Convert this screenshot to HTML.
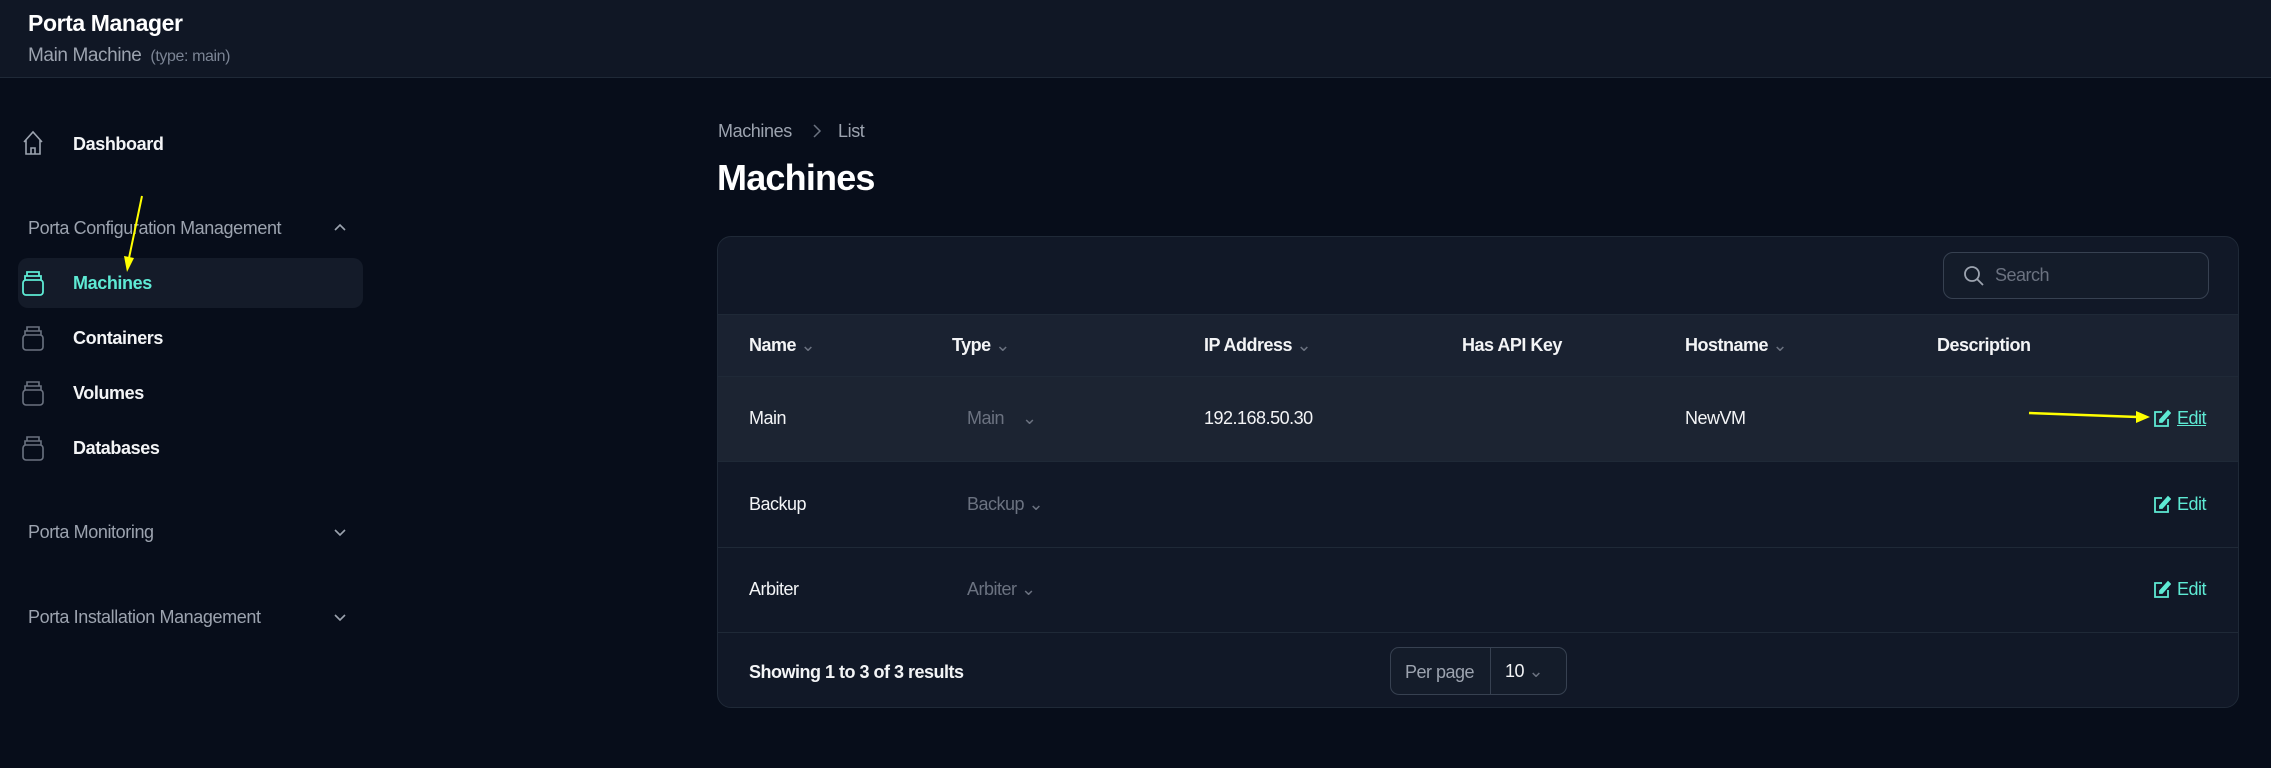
<!DOCTYPE html>
<html><head><meta charset="utf-8"><style>
*{margin:0;padding:0;box-sizing:border-box}
body{width:2271px;height:768px;background:#070d1a;font-family:"Liberation Sans",sans-serif;color:#f3f4f6;position:relative;overflow:hidden}
.a{position:absolute;white-space:nowrap}
.hdr{position:absolute;left:0;top:0;width:2271px;height:78px;background:#101725;border-bottom:1px solid #1f2937}
.nav{font-size:18px;font-weight:bold;letter-spacing:-0.4px;color:#f3f4f6}
.sec{font-size:18px;color:#9ca3af;letter-spacing:-0.4px}
.card{position:absolute;left:717px;top:236px;width:1522px;height:472px;background:#111827;border:1px solid #1f2937;border-radius:14px;overflow:hidden}
.row{position:absolute;left:0;width:1522px;border-top:1px solid #1f2937}
.t{font-size:18px;letter-spacing:-0.5px}
.th{font-weight:bold}
.g{color:#6b7280}
.teal{color:#5eead4}
svg{position:absolute}
</style></head><body>
<div class="hdr"></div>
<div class="a" style="left:28px;top:10px;font-size:23px;font-weight:bold;letter-spacing:-0.4px;color:#fff">Porta Manager</div>
<div class="a" style="left:28px;top:45px;font-size:19px;color:#9ca3af;letter-spacing:-0.4px">Main Machine <span style="font-size:16px;color:#7b8494">&nbsp;(type: main)</span></div>

<!-- sidebar -->
<svg style="left:22px;top:130px" width="22" height="26" viewBox="0 0 22 26" fill="none" stroke="#9ca3af" stroke-width="1.6"><path d="M2 12 L11 2 L20 12 M4 10 V24 H18 V10 M9 24 V18 H13 V24"/></svg>
<div class="a nav" style="left:73px;top:134px">Dashboard</div>
<div class="a sec" style="left:28px;top:218px">Porta Configuration Management</div>
<svg style="left:333px;top:222px" width="14" height="10" viewBox="0 0 14 10" fill="none" stroke="#9ca3af" stroke-width="1.6"><path d="M2 8 L7 3 L12 8"/></svg>
<div class="a" style="left:18px;top:258px;width:345px;height:50px;background:#141b29;border-radius:10px"></div>
<svg style="left:21px;top:269px" width="24" height="28" viewBox="0 0 24 28" fill="none" stroke="#5eead4" stroke-width="1.8"><rect x="2" y="11" width="20" height="15" rx="3"/><path d="M4 11 V7 H20 V11 M6 7 V3 H18 V7"/></svg>
<div class="a nav teal" style="left:73px;top:273px">Machines</div>
<svg style="left:21px;top:324px" width="24" height="28" viewBox="0 0 24 28" fill="none" stroke="#6b7280" stroke-width="1.6"><rect x="2" y="11" width="20" height="15" rx="3"/><path d="M4 11 V7 H20 V11 M6 7 V3 H18 V7"/></svg>
<div class="a nav" style="left:73px;top:328px">Containers</div>
<svg style="left:21px;top:379px" width="24" height="28" viewBox="0 0 24 28" fill="none" stroke="#6b7280" stroke-width="1.6"><rect x="2" y="11" width="20" height="15" rx="3"/><path d="M4 11 V7 H20 V11 M6 7 V3 H18 V7"/></svg>
<div class="a nav" style="left:73px;top:383px">Volumes</div>
<svg style="left:21px;top:434px" width="24" height="28" viewBox="0 0 24 28" fill="none" stroke="#6b7280" stroke-width="1.6"><rect x="2" y="11" width="20" height="15" rx="3"/><path d="M4 11 V7 H20 V11 M6 7 V3 H18 V7"/></svg>
<div class="a nav" style="left:73px;top:438px">Databases</div>
<div class="a sec" style="left:28px;top:522px">Porta Monitoring</div>
<svg style="left:333px;top:528px" width="14" height="10" viewBox="0 0 14 10" fill="none" stroke="#9ca3af" stroke-width="1.6"><path d="M2 2 L7 7 L12 2"/></svg>
<div class="a sec" style="left:28px;top:607px">Porta Installation Management</div>
<svg style="left:333px;top:613px" width="14" height="10" viewBox="0 0 14 10" fill="none" stroke="#9ca3af" stroke-width="1.6"><path d="M2 2 L7 7 L12 2"/></svg>

<!-- main -->
<div class="a" style="left:718px;top:121px;font-size:18px;color:#9ca3af;letter-spacing:-0.4px">Machines</div>
<svg style="left:812px;top:123px" width="10" height="16" viewBox="0 0 10 16" fill="none" stroke="#6b7280" stroke-width="1.5"><path d="M2 2 L8 8 L2 14"/></svg>
<div class="a" style="left:838px;top:121px;font-size:18px;color:#9ca3af;letter-spacing:-0.4px">List</div>
<div class="a" style="left:717px;top:157px;font-size:36px;font-weight:bold;color:#fff;letter-spacing:-0.8px">Machines</div>

<div class="card">
  <div class="a" style="left:1225px;top:15px;width:266px;height:47px;border:1px solid #374151;border-radius:10px;background:#141c2a"></div>
  <svg style="left:1244px;top:27px" width="24" height="24" viewBox="0 0 24 24" fill="none" stroke="#9ca3af" stroke-width="1.8"><circle cx="10" cy="10" r="7"/><path d="M15 15 L21 21"/></svg>
  <div class="a t" style="left:1277px;top:28px;color:#6b7280">Search</div>

  <div class="row" style="top:77px;height:62px;background:#1a2231"></div>
  <div class="a t th" style="left:31px;top:98px">Name <span class="g" style="font-weight:normal">&#8964;</span></div>
  <div class="a t th" style="left:234px;top:98px">Type <span class="g" style="font-weight:normal">&#8964;</span></div>
  <div class="a t th" style="left:486px;top:98px">IP Address <span class="g" style="font-weight:normal">&#8964;</span></div>
  <div class="a t th" style="left:744px;top:98px">Has API Key</div>
  <div class="a t th" style="left:967px;top:98px">Hostname <span class="g" style="font-weight:normal">&#8964;</span></div>
  <div class="a t th" style="left:1219px;top:98px">Description</div>

  <div class="row" style="top:139px;height:85px;background:#1c2432"></div>
  <div class="a t" style="left:31px;top:171px">Main</div>
  <div class="a t g" style="left:249px;top:171px">Main &nbsp;&nbsp;&nbsp;&#8964;</div>
  <div class="a t" style="left:486px;top:171px">192.168.50.30</div>
  <div class="a t" style="left:967px;top:171px">NewVM</div>

  <div class="row" style="top:224px;height:86px"></div>
  <div class="a t" style="left:31px;top:257px">Backup</div>
  <div class="a t g" style="left:249px;top:257px">Backup &#8964;</div>

  <div class="row" style="top:310px;height:85px"></div>
  <div class="a t" style="left:31px;top:342px">Arbiter</div>
  <div class="a t g" style="left:249px;top:342px">Arbiter &#8964;</div>

  <div class="row" style="top:395px;height:77px"></div>
  <div class="a t th" style="left:31px;top:425px">Showing 1 to 3 of 3 results</div>
  <div class="a" style="left:672px;top:410px;width:177px;height:48px;border:1px solid #374151;border-radius:9px;background:#141c2a"></div>
  <div class="a" style="left:772px;top:411px;width:1px;height:46px;background:#374151"></div>
  <div class="a t" style="left:687px;top:425px;color:#9ca3af">Per page</div>
  <div class="a t" style="left:787px;top:424px">10 <span class="g">&#8964;</span></div>
</div>

<!-- edit links -->
<svg style="left:2153px;top:408px" width="18" height="20" viewBox="0 0 18 20" fill="none" stroke="#5eead4" stroke-width="1.8"><path d="M9 4 H2 V18 H15 V11"/><path d="M7 12 L15 3 L17 5 L9 14 H7 Z" fill="#5eead4"/></svg>
<div class="a t teal" style="left:2177px;top:408px;text-decoration:underline">Edit</div>
<svg style="left:2153px;top:494px" width="18" height="20" viewBox="0 0 18 20" fill="none" stroke="#5eead4" stroke-width="1.8"><path d="M9 4 H2 V18 H15 V11"/><path d="M7 12 L15 3 L17 5 L9 14 H7 Z" fill="#5eead4"/></svg>
<div class="a t teal" style="left:2177px;top:494px">Edit</div>
<svg style="left:2153px;top:579px" width="18" height="20" viewBox="0 0 18 20" fill="none" stroke="#5eead4" stroke-width="1.8"><path d="M9 4 H2 V18 H15 V11"/><path d="M7 12 L15 3 L17 5 L9 14 H7 Z" fill="#5eead4"/></svg>
<div class="a t teal" style="left:2177px;top:579px">Edit</div>

<!-- yellow arrows -->
<svg style="left:0;top:0" width="2271" height="768">
  <line x1="142" y1="196" x2="129" y2="258" stroke="#ffff00" stroke-width="2"/>
  <polygon points="124,256 134,258 127,272" fill="#ffff00"/>
  <line x1="2029" y1="413" x2="2138" y2="417" stroke="#ffff00" stroke-width="2.5"/>
  <polygon points="2136,411 2150,417 2136,423" fill="#ffff00"/>
</svg>
</body></html>
